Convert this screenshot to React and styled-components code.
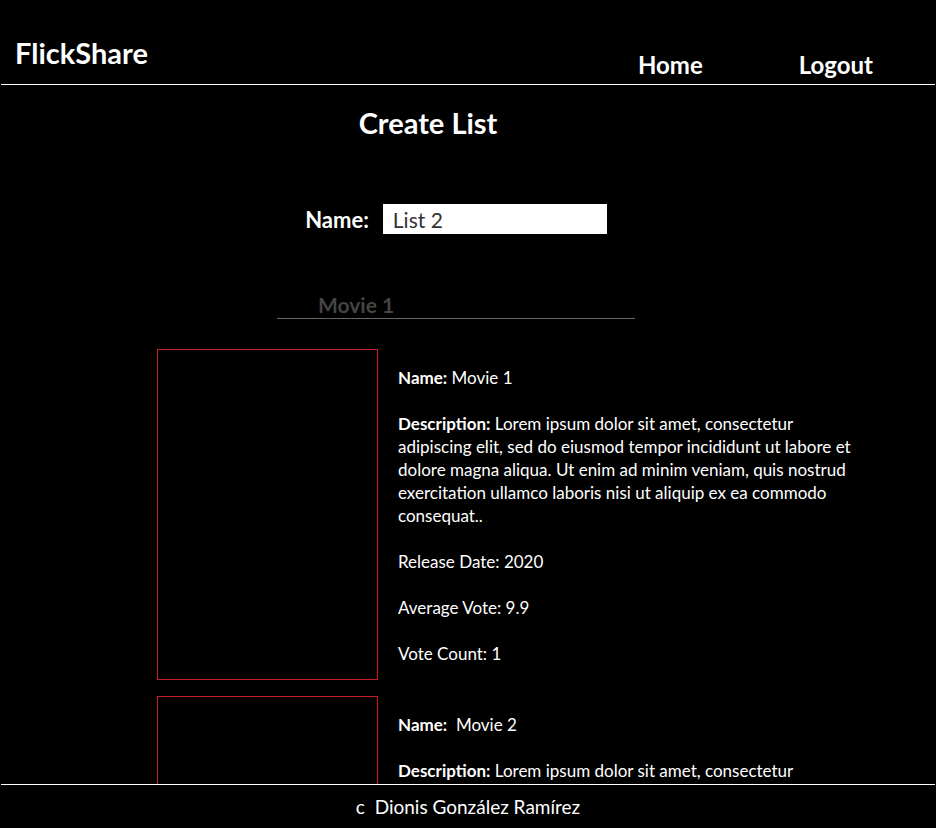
import React from 'react';
import styled, {createGlobalStyle} from 'styled-components';

const GlobalStyle = createGlobalStyle`
  body {
    margin: 0;
    background: #000000;
    color: #ffffff;
    font-family: Lato, "Open Sans", sans-serif;
  }
`;

const Header = styled.header`
  height: 85px;
  border-bottom: 1px solid #ffffff;
  display: flex;
  justify-content: space-between;
  box-sizing: border-box;
  margin: 0 1px;
`;

const Logo = styled.h1`
  margin: 0;
  padding: 36px 0 0 14px;
  font-size: 29px;
  font-weight: 700;
  line-height: 34px;
`;

const Nav = styled.nav`
  display: flex;
  align-items: flex-end;
  gap: 96px;
  padding: 0 62px 4px 0;
`;

const NavLink = styled.a`
  color: #ffffff;
  font-size: 24px;
  font-weight: 700;
  text-decoration: none;
  line-height: 30px;
  cursor: pointer;
`;

const Main = styled.main`
  padding-bottom: 60px;
`;

const Title = styled.h2`
  margin: 21px 0 0;
  padding-right: 80px;
  text-align: center;
  font-size: 29px;
  font-weight: 700;
  line-height: 34px;
`;

const NameRow = styled.div`
  display: flex;
  justify-content: center;
  align-items: center;
  gap: 14px;
  margin: 64px 0 0;
  padding-right: 24px;

  label {
    font-size: 22px;
    font-weight: 700;
  }

  input {
    width: 224px;
    height: 30px;
    box-sizing: border-box;
    border: 0;
    padding: 0 10px;
    font-family: inherit;
    font-size: 21px;
    color: #333333;
    background: #ffffff;
    outline: none;
  }
`;

const SectionTitle = styled.h3`
  margin: 58px 0 0 277px;
  width: 358px;
  padding-left: 41px;
  box-sizing: border-box;
  border-bottom: 1px solid #666666;
  color: #444444;
  font-size: 21px;
  font-weight: 700;
  line-height: 26px;
`;

const MovieList = styled.div`
  display: flex;
  flex-direction: column;
  gap: 16px;
  margin: 30px 0 0 157px;
`;

const Card = styled.div`
  display: flex;
  gap: 20px;
`;

const Poster = styled.div`
  width: 221px;
  height: 331px;
  flex: none;
  box-sizing: border-box;
  border: 1px solid #c81e28;
`;

const Info = styled.div`
  width: 468px;
  padding-top: 17px;
  font-size: 17px;
  line-height: 23px;

  p {
    margin: 0 0 23px;
  }

  p:last-child {
    margin-bottom: 0;
  }
`;

const Footer = styled.footer`
  position: fixed;
  left: 0;
  right: 0;
  bottom: 0;
  height: 43px;
  background: #000000;
  border-top: 1px solid #ffffff;
  margin: 0 1px;
  display: flex;
  justify-content: center;
  align-items: center;
  font-size: 19px;
`;

const movies = [
  {name: 'Movie 1', spaced: false},
  {name: 'Movie 2', spaced: true},
];

const description = 'Lorem ipsum dolor sit amet, consectetur adipiscing elit, sed do eiusmod tempor incididunt ut labore et dolore magna aliqua. Ut enim ad minim veniam, quis nostrud exercitation ullamco laboris nisi ut aliquip ex ea commodo consequat..';

function MovieCard({movie}) {
  return (
    <Card>
      <Poster/>
      <Info>
        <p><b>Name:</b>{movie.spaced ? '\u00a0 ' : ' '}{movie.name}</p>
        <p><b>Description:</b> {description}</p>
        <p>Release Date: 2020</p>
        <p>Average Vote: 9.9</p>
        <p>Vote Count: 1</p>
      </Info>
    </Card>
  );
}

export default function App() {
  return (
    <>
      <GlobalStyle/>
      <Header>
        <Logo>FlickShare</Logo>
        <Nav>
          <NavLink>Home</NavLink>
          <NavLink>Logout</NavLink>
        </Nav>
      </Header>
      <Main>
        <Title>Create List</Title>
        <NameRow>
          <label htmlFor="listName">Name:</label>
          <input id="listName" defaultValue="List 2"/>
        </NameRow>
        <SectionTitle>Movie 1</SectionTitle>
        <MovieList>
          {movies.map(m => <MovieCard key={m.name} movie={m}/>)}
        </MovieList>
      </Main>
      <Footer>c&nbsp; Dionis González Ramírez</Footer>
    </>
  );
}
